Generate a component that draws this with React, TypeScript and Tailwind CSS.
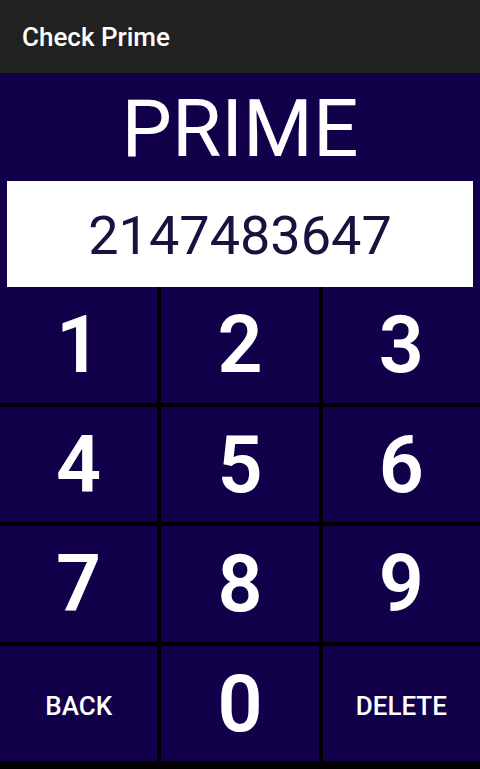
import { useState } from "react"

const keys = ["1", "2", "3", "4", "5", "6", "7", "8", "9", "BACK", "0", "DELETE"]

export default function App() {
  const [value, setValue] = useState("2147483647")

  function press(key: string) {
    if (key === "DELETE") {
      setValue((v) => v.slice(0, -1))
      return
    }
    if (key === "BACK") {
      setValue("")
      return
    }
    setValue((v) => v + key)
  }

  return (
    <div className="flex h-[769px] w-[480px] flex-col bg-black font-['Roboto',sans-serif]">
      <header className="flex h-[73px] shrink-0 items-center bg-[#212121] px-[22px] pt-[1px]">
        <h1 className="text-[26px] font-medium text-white">Check Prime</h1>
      </header>

      <section className="shrink-0 bg-[#12004b]">
        <div className="flex h-[108px] items-center justify-center pt-[4px]">
          <span className="text-[80px] leading-none text-white">PRIME</span>
        </div>
        <div className="px-[7px]">
          <div className="flex h-[106px] items-center justify-center bg-white pt-[3px]">
            <span className="text-[54px] leading-none text-[#16133f]">{value}</span>
          </div>
        </div>
      </section>

      {/* keypad: black shows through the gaps */}
      <div className="grid flex-1 grid-cols-3 grid-rows-4 gap-[4px] pb-[8px]">
        {keys.map((key) => (
          <button
            key={key}
            onClick={() => press(key)}
            className={
              key.length > 1
                ? "flex items-center justify-center bg-[#12004b] pt-[6px] text-[26px] font-medium text-white"
                : "flex items-center justify-center bg-[#12004b] pt-[2px] text-[79px] font-semibold leading-none text-white"
            }
          >
            {key}
          </button>
        ))}
      </div>
    </div>
  )
}
